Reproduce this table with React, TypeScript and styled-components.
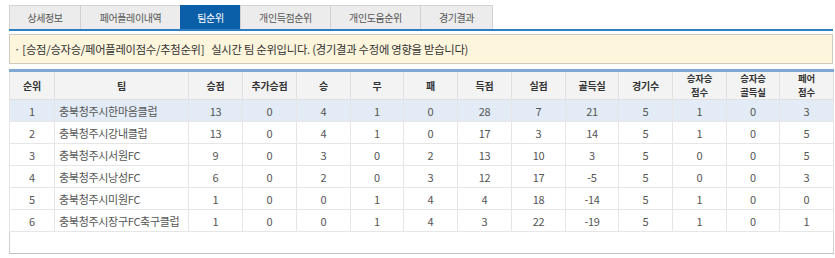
import React from "react";
import styled, { createGlobalStyle } from "styled-components";

const GlobalStyle = createGlobalStyle`
  html, body {
    margin: 0;
    padding: 0;
    background: #ffffff;
  }
  body {
    font-family: "Noto Sans CJK KR", "Noto Sans", sans-serif;
  }
`;

const Page = styled("div")`
  width: 835px;
  box-sizing: border-box;
  padding: 5px 2px 0 9px;
  color: #444;
`;

const TabBar = styled("ul")`
  display: flex;
  margin: 0;
  padding: 0;
  list-style: none;
  border-bottom: 2px solid #2f7dc2;
`;

const Tab = styled("li")<{ $active?: boolean; $w: number }>`
  width: ${(p) => p.$w}px;
  height: 24px;
  box-sizing: border-box;
  display: flex;
  align-items: center;
  justify-content: center;
  border: 1px solid ${(p) => (p.$active ? "#0b5ea8" : "#d2d2d2")};
  border-bottom: none;
  margin-right: -1px;
  background-color: ${(p) => (p.$active ? "#0b5ea8" : "#ececec")};
  color: ${(p) => (p.$active ? "#ffffff" : "#555")};
  font-size: 10px;
  letter-spacing: -0.4px;
`;

const Notice = styled("div")`
  margin-top: 3px;
  height: 30px;
  box-sizing: border-box;
  display: flex;
  align-items: center;
  padding: 0 4px;
  border: 1px solid #cfcac0;
  background-color: #fdf5dc;
  color: #333;
  font-size: 11.3px;
  letter-spacing: -0.25px;
  white-space: pre;
`;

const Table = styled("table")`
  margin-top: 5px;
  width: 824px;
  border-collapse: collapse;
  table-layout: fixed;
  border-top: 3px solid #7ea9d5;
  border-left: 1px solid #cfcfcf;
  border-right: 1px solid #cfcfcf;
  border-bottom: 1px solid #c4c4c4;
`;

const HeadCell = styled("th")<{ $multi?: boolean }>`
  height: 27px;
  padding: 0;
  background-color: #f3f3f3;
  border: 1px solid #e0e0e0;
  border-top: none;
  color: #333;
  font-size: ${(p) => (p.$multi ? "9.4px" : "10px")};
  font-weight: 700;
  letter-spacing: -0.2px;
  line-height: ${(p) => (p.$multi ? "13.6px" : "14px")};
  text-align: center;
`;

const HeadLine = styled("span")`
  display: block;
`;

const Row = styled("tr")<{ $hl?: boolean }>`
  background-color: ${(p) => (p.$hl ? "#e3ecf6" : "#ffffff")};
`;

const Cell = styled("td")<{ $left?: boolean }>`
  height: 21px;
  padding: ${(p) => (p.$left ? "0 0 0 4px" : "0")};
  border: 1px solid #e6e6e6;
  color: #555;
  font-size: 11px;
  letter-spacing: -0.3px;
  text-align: ${(p) => (p.$left ? "left" : "center")};
  white-space: nowrap;
`;

const EmptyCell = styled("td")`
  height: 21px;
  padding: 0;
  border: none;
`;

const tabs = [
  { label: "상세정보", w: 72 },
  { label: "페어플레이내역", w: 101 },
  { label: "팀순위", w: 61, active: true },
  { label: "개인득점순위", w: 91 },
  { label: "개인도움순위", w: 91 },
  { label: "경기결과", w: 73 },
];

const headers = [
  ["순위"],
  ["팀"],
  ["승점"],
  ["추가승점"],
  ["승"],
  ["무"],
  ["패"],
  ["득점"],
  ["실점"],
  ["골득실"],
  ["경기수"],
  ["승자승", "점수"],
  ["승자승", "골득실"],
  ["페어", "점수"],
];

const widths = [45, 134, 54, 54, 54, 53, 54, 54, 54, 53, 54, 54, 53, 54];

const rows: (string | number)[][] = [
  [1, "충북청주시한마음클럽", 13, 0, 4, 1, 0, 28, 7, 21, 5, 1, 0, 3],
  [2, "충북청주시강내클럽", 13, 0, 4, 1, 0, 17, 3, 14, 5, 1, 0, 5],
  [3, "충북청주시서원FC", 9, 0, 3, 0, 2, 13, 10, 3, 5, 0, 0, 5],
  [4, "충북청주시낭성FC", 6, 0, 2, 0, 3, 12, 17, -5, 5, 0, 0, 3],
  [5, "충북청주시미원FC", 1, 0, 0, 1, 4, 4, 18, -14, 5, 1, 0, 0],
  [6, "충북청주시장구FC축구클럽", 1, 0, 0, 1, 4, 3, 22, -19, 5, 1, 0, 1],
];

export default function App() {
  return (
    <Page>
      <GlobalStyle />
      <TabBar>
        {tabs.map((t) => (
          <Tab key={t.label} $w={t.w} $active={t.active}>
            {t.label}
          </Tab>
        ))}
      </TabBar>

      <Notice>{"· [승점/승자승/페어플레이점수/추첨순위]   실시간 팀 순위입니다. (경기결과 수정에 영향을 받습니다)"}</Notice>

      <Table>
        <colgroup>
          {widths.map((w, i) => (
            <col key={i} style={{ width: w }} />
          ))}
        </colgroup>
        <thead>
          <tr>
            {headers.map((h, i) => (
              <HeadCell key={i} $multi={h.length > 1}>
                {h.map((line, j) => (
                  <HeadLine key={j}>{line}</HeadLine>
                ))}
              </HeadCell>
            ))}
          </tr>
        </thead>
        <tbody>
          {rows.map((r, i) => (
            <Row key={i} $hl={i === 0}>
              {r.map((v, j) => (
                <Cell key={j} $left={j === 1}>
                  {v}
                </Cell>
              ))}
            </Row>
          ))}
          <tr>
            <EmptyCell colSpan={14} />
          </tr>
        </tbody>
      </Table>
    </Page>
  );
}
